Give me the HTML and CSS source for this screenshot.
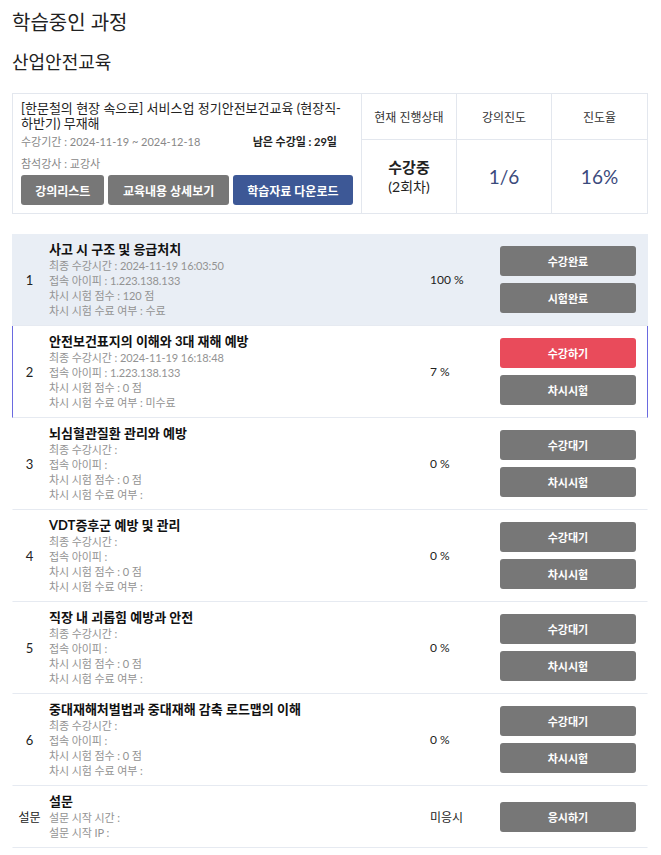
FILE: index.html
```html
<!DOCTYPE html>
<html lang="ko">
<head>
<meta charset="utf-8">
<title>학습중인 과정</title>
<link rel="stylesheet" href="styles.css">
</head>
<body>
<div class="page">
  <h1 class="page-title">학습중인 과정</h1>
  <h2 class="section-title">산업안전교육</h2>

  <div class="course-card">
    <div class="course-info">
      <div class="course-name">[한문철의 현장 속으로] 서비스업 정기안전보건교육 (현장직-하반기) 무재해</div>
      <div class="course-meta">
        <span>수강기간 : 2024-11-19 ~ 2024-12-18</span>
        <span class="remain">남은 수강일 : 29일</span>
      </div>
      <div class="course-meta">참석강사 : 교강사</div>
      <div class="course-actions">
        <button class="btn btn-gray btn-list">강의리스트</button>
        <button class="btn btn-gray btn-wide">교육내용 상세보기</button>
        <button class="btn btn-blue btn-wide">학습자료 다운로드</button>
      </div>
    </div>
    <div class="stat">
      <div class="stat-head">현재 진행상태</div>
      <div class="stat-body"><div class="status"><strong>수강중</strong><span>(2회차)</span></div></div>
    </div>
    <div class="stat">
      <div class="stat-head">강의진도</div>
      <div class="stat-body"><span class="stat-num">1/6</span></div>
    </div>
    <div class="stat">
      <div class="stat-head">진도율</div>
      <div class="stat-body"><span class="stat-num">16%</span></div>
    </div>
  </div>

  <div class="lessons">
    <div class="lesson done">
      <div class="num">1</div>
      <div class="detail">
        <div class="lesson-title">사고 시 구조 및 응급처치</div>
        <div class="line">최종 수강시간 : 2024-11-19 16:03:50</div>
        <div class="line">접속 아이피 : 1.223.138.133</div>
        <div class="line">차시 시험 점수 : 120 점</div>
        <div class="line">차시 시험 수료 여부 : 수료</div>
      </div>
      <div class="pct">100 %</div>
      <div class="actions">
        <button class="btn btn-gray">수강완료</button>
        <button class="btn btn-gray">시험완료</button>
      </div>
    </div>

    <div class="lesson current">
      <div class="num">2</div>
      <div class="detail">
        <div class="lesson-title">안전보건표지의 이해와 3대 재해 예방</div>
        <div class="line">최종 수강시간 : 2024-11-19 16:18:48</div>
        <div class="line">접속 아이피 : 1.223.138.133</div>
        <div class="line">차시 시험 점수 : 0 점</div>
        <div class="line">차시 시험 수료 여부 : 미수료</div>
      </div>
      <div class="pct">7 %</div>
      <div class="actions">
        <button class="btn btn-red">수강하기</button>
        <button class="btn btn-gray">차시시험</button>
      </div>
    </div>

    <div class="lesson">
      <div class="num">3</div>
      <div class="detail">
        <div class="lesson-title">뇌심혈관질환 관리와 예방</div>
        <div class="line">최종 수강시간 :</div>
        <div class="line">접속 아이피 :</div>
        <div class="line">차시 시험 점수 : 0 점</div>
        <div class="line">차시 시험 수료 여부 :</div>
      </div>
      <div class="pct">0 %</div>
      <div class="actions">
        <button class="btn btn-gray">수강대기</button>
        <button class="btn btn-gray">차시시험</button>
      </div>
    </div>

    <div class="lesson">
      <div class="num">4</div>
      <div class="detail">
        <div class="lesson-title">VDT증후군 예방 및 관리</div>
        <div class="line">최종 수강시간 :</div>
        <div class="line">접속 아이피 :</div>
        <div class="line">차시 시험 점수 : 0 점</div>
        <div class="line">차시 시험 수료 여부 :</div>
      </div>
      <div class="pct">0 %</div>
      <div class="actions">
        <button class="btn btn-gray">수강대기</button>
        <button class="btn btn-gray">차시시험</button>
      </div>
    </div>

    <div class="lesson">
      <div class="num">5</div>
      <div class="detail">
        <div class="lesson-title">직장 내 괴롭힘 예방과 안전</div>
        <div class="line">최종 수강시간 :</div>
        <div class="line">접속 아이피 :</div>
        <div class="line">차시 시험 점수 : 0 점</div>
        <div class="line">차시 시험 수료 여부 :</div>
      </div>
      <div class="pct">0 %</div>
      <div class="actions">
        <button class="btn btn-gray">수강대기</button>
        <button class="btn btn-gray">차시시험</button>
      </div>
    </div>

    <div class="lesson">
      <div class="num">6</div>
      <div class="detail">
        <div class="lesson-title">중대재해처벌법과 중대재해 감축 로드맵의 이해</div>
        <div class="line">최종 수강시간 :</div>
        <div class="line">접속 아이피 :</div>
        <div class="line">차시 시험 점수 : 0 점</div>
        <div class="line">차시 시험 수료 여부 :</div>
      </div>
      <div class="pct">0 %</div>
      <div class="actions">
        <button class="btn btn-gray">수강대기</button>
        <button class="btn btn-gray">차시시험</button>
      </div>
    </div>

    <div class="lesson survey">
      <div class="num">설문</div>
      <div class="detail">
        <div class="lesson-title">설문</div>
        <div class="line">설문 시작 시간 :</div>
        <div class="line">설문 시작 IP :</div>
      </div>
      <div class="pct">미응시</div>
      <div class="actions">
        <button class="btn btn-gray">응시하기</button>
      </div>
    </div>
  </div>
</div>
</body>
</html>
```

FILE: styles.css
```css
* { box-sizing: border-box; }

html, body {
  margin: 0;
  padding: 0;
  background: #fff;
}

body {
  font-family: Lato, "Noto Sans CJK KR", sans-serif;
  color: #222;
}

.page {
  padding: 0 13px 0 12px;
}

.page-title {
  margin: 0;
  padding-top: 8px;
  font-size: 20px;
  line-height: 28px;
  font-weight: 400;
  color: #222;
}

.section-title {
  margin: 0;
  padding-top: 14px;
  font-size: 18px;
  line-height: 24px;
  font-weight: 400;
  color: #222;
}

/* Course summary card */
.course-card {
  margin-top: 19px;
  display: flex;
  border: 1px solid #e3e7ee;
  height: 121px;
}

.course-info {
  flex: 1;
  padding: 7px 8px 8px 8px;
  border-right: 1px solid #e3e7ee;
  min-width: 0;
}

.course-name {
  font-size: 13px;
  line-height: 15px;
  color: #222;
  word-break: keep-all;
}

.course-meta {
  display: flex;
  justify-content: space-between;
  padding-right: 16px;
  margin-top: 3px;
  font-size: 11px;
  line-height: 16px;
  color: #888;
}

.course-meta .remain {
  color: #222;
  font-weight: 700;
}

.course-meta + .course-meta {
  margin-top: 6px;
}

.course-actions {
  display: flex;
  gap: 4px;
  margin-top: 3px;
}

.btn {
  font-family: Lato, "Noto Sans CJK KR", sans-serif;
  border: 0;
  border-radius: 3px;
  height: 30px;
  color: #fff;
  font-size: 12px;
  font-weight: 700;
  padding: 0;
  cursor: pointer;
}

.course-actions .btn-list { width: 84px; }
.course-actions .btn-wide { width: 121px; }

.btn-gray { background: #777777; }
.btn-blue { background: #3d5896; }
.btn-red  { background: #e94b5b; }

.stat {
  width: 95px;
  display: flex;
  flex-direction: column;
  border-right: 1px solid #e3e7ee;
}

.stat:first-of-type { width: 96px; }
.stat:last-child { border-right: 0; }

.stat-head {
  height: 46px;
  display: flex;
  align-items: center;
  justify-content: center;
  font-size: 12px;
  color: #333;
  border-bottom: 1px solid #e3e7ee;
}

.stat-body {
  flex: 1;
  display: flex;
  align-items: center;
  justify-content: center;
}

.status {
  display: flex;
  flex-direction: column;
  align-items: center;
  line-height: 20px;
  color: #222;
}

.status strong {
  font-size: 15px;
}

.status span {
  font-size: 14px;
}

.stat-num {
  font-size: 19px;
  color: #3a4a7c;
}

/* Lesson list */
.lessons {
  margin-top: 20px;
}

.lesson {
  display: grid;
  grid-template-columns: 33px 1fr 70px 136px;
  column-gap: 0;
  align-items: center;
  padding: 7px 11px 7px 0;
  border-bottom: 1px solid #e6eaf1;
  border-left: 1px solid transparent;
  border-right: 1px solid transparent;
}

.lesson.done {
  background: #e9eef5;
}

.lesson.current {
  border-left-color: #6a6ae0;
  border-right-color: #6a6ae0;
}

.num {
  text-align: center;
  font-size: 13px;
  color: #222;
}

.survey .num {
  font-size: 12px;
}

.detail {
  padding-left: 3px;
}

.lesson-title {
  font-size: 13px;
  line-height: 17px;
  font-weight: 700;
  color: #111;
}

.line {
  font-size: 11px;
  line-height: 15px;
  color: #939393;
  letter-spacing: -0.1px;
}

.pct {
  font-size: 12px;
  color: #222;
}

.actions {
  display: flex;
  flex-direction: column;
  gap: 7px;
}

.actions .btn {
  width: 136px;
  font-size: 11px;
}
```
